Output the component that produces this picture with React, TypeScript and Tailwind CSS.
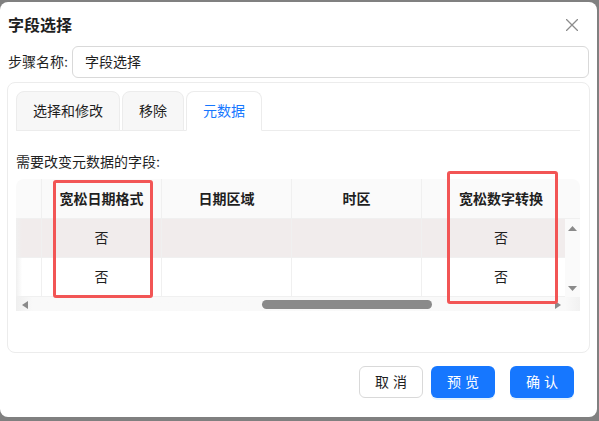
const cols = [
  { key: "idx", title: "", width: 26 },
  { key: "lenientDate", title: "宽松日期格式", width: 120 },
  { key: "dateLocale", title: "日期区域", width: 130 },
  { key: "timezone", title: "时区", width: 130 },
  { key: "lenientNumber", title: "宽松数字转换", width: 158 },
]

const rows = [
  { idx: "", lenientDate: "否", dateLocale: "", timezone: "", lenientNumber: "否" },
  { idx: "", lenientDate: "否", dateLocale: "", timezone: "", lenientNumber: "否" },
] as Record<string, string>[]

const tabs = [
  { label: "选择和修改", width: "w-[104px]" },
  { label: "移除", width: "w-[62px]" },
  { label: "元数据", width: "w-[76px]" },
]

function Triangle({ dir }: { dir: "up" | "down" | "left" | "right" }) {
  const pts = {
    up: "0,5 4.5,0 9,5",
    down: "0,0 9,0 4.5,5",
    left: "6,0 6,8 0,4",
    right: "0,0 6,4 0,8",
  }[dir]
  const box = dir === "up" || dir === "down" ? "0 0 9 5" : "0 0 6 8"
  const cls = dir === "up" || dir === "down" ? "w-[9px] h-[5px]" : "w-[6px] h-[8px]"
  return (
    <svg viewBox={box} className={cls}>
      <polygon points={pts} fill="#8a8a8a" />
    </svg>
  )
}

function CloseIcon() {
  return (
    <svg viewBox="0 0 12 12" className="w-[12px] h-[12px]">
      <path d="M0.5 0.5 L11.5 11.5 M11.5 0.5 L0.5 11.5" stroke="#8c8c8c" strokeWidth="1.3" strokeLinecap="round" />
    </svg>
  )
}

function MetaTable() {
  return (
    <div className="relative w-[564px] h-[133px]">
      {/* header */}
      <div className="flex h-[40px] w-[564px] rounded-t-lg bg-[#fafafa] border-b border-[#f0f0f0] overflow-hidden">
        {cols.map((c, i) => (
          <div
            key={c.key}
            style={{ width: c.width }}
            className={`shrink-0 flex items-center justify-center text-[14px] leading-[20px] font-bold text-[#1f1f1f] ${i < cols.length - 1 ? "border-r border-[#f0f0f0]" : ""}`}
          >
            {c.title}
          </div>
        ))}
      </div>

      {/* body + vertical scrollbar */}
      <div className="flex">
        <div className="w-[549px] overflow-hidden">
          {rows.map((r, ri) => (
            <div key={ri} className={`flex h-[39px] border-b border-[#f0f0f0] ${ri === 0 ? "bg-[#f1ecec]" : "bg-white"}`}>
              {cols.map((c, i) => (
                <div
                  key={c.key}
                  style={{ width: c.width }}
                  className={`shrink-0 flex items-center justify-center text-[14px] leading-[20px] text-[#1f1f1f] ${i < cols.length - 1 ? "border-r border-[#f0f0f0]" : ""} ${i === 0 ? "bg-gradient-to-r from-[#f0f0f0] to-transparent to-[25%]" : ""}`}
                >
                  {r[c.key]}
                </div>
              ))}
            </div>
          ))}
        </div>
        <div className="w-[15px] h-[78px] bg-[#fafafa] flex flex-col items-center justify-between pt-[7px] pb-[6px]">
          <Triangle dir="up" />
          <Triangle dir="down" />
        </div>
      </div>

      {/* horizontal scrollbar */}
      <div className="flex h-[14px] w-[564px] bg-[#f9f9f9]">
        <div className="relative w-[549px] h-full bg-gradient-to-r from-[#efefef] to-[#f9f9f9] to-[3%]">
          <div className="absolute left-[6px] top-[4px]"><Triangle dir="left" /></div>
          <div className="absolute left-[246px] top-[3px] w-[170px] h-[9px] rounded-full bg-[#8a8a8a]" />
          <div className="absolute left-[539px] top-[4px]"><Triangle dir="right" /></div>
        </div>
        <div className="w-[15px] h-full bg-gradient-to-r from-[#f9f9f9] to-[#f1f1f1]" />
      </div>

      {/* highlight boxes */}
      <div className="absolute left-[37px] top-[1px] w-[100px] h-[118px] border-[3px] border-[#f25555] rounded-[3px]" />
      <div className="absolute left-[431px] top-[-8px] w-[111px] h-[133px] border-[3px] border-[#f25555] rounded-[3px]" />
    </div>
  )
}

export default function App() {
  return (
    <div className="w-[599px] h-[421px] bg-[#808080] pt-[2px] overflow-hidden font-['Inter','Noto_Sans_CJK_SC',sans-serif] text-[#1f1f1f]">
      <div className="w-[597px] h-[415px] bg-white rounded-lg flex flex-col">
        {/* title */}
        <div className="flex items-center justify-between h-[45px] pl-2 pr-[19px]">
          <div className="text-[16px] leading-[20px] font-bold">字段选择</div>
          <CloseIcon />
        </div>

        {/* step name */}
        <div className="flex items-center h-[32px] pl-2 -mt-px">
          <div className="w-[64px] text-[14px] leading-[20px]">步骤名称:</div>
          <div className="w-[517px] h-[32px] border border-[#d9d9d9] rounded-md flex items-center px-3 text-[14px] leading-[20px]">
            字段选择
          </div>
        </div>

        {/* tabs panel */}
        <div className="ml-[7px] mt-[4px] w-[583px] h-[271px] border border-[#ececec] rounded-lg pt-2 pl-2">
          <div className="flex gap-[2px] h-[40px] w-[564px] border-b border-[#ececec]">
            {tabs.map((t, i) => {
              const active = i === 2
              return (
                <div
                  key={t.label}
                  className={`${t.width} h-[40px] flex items-center justify-center rounded-t-lg border border-[#ececec] text-[14px] leading-[20px] ${active ? "bg-white border-b-white text-[#1677ff]" : "bg-[#f7f7f7] text-[#1f1f1f]"}`}
                >
                  {t.label}
                </div>
              )
            })}
          </div>
          <div className="mt-[21px] text-[14px] leading-[20px]">需要改变元数据的字段:</div>
          <div className="mt-[7px]">
            <MetaTable />
          </div>
        </div>

        {/* footer */}
        <div className="flex justify-end items-center mt-[13px] pr-[23px]">
          <button className="w-[64px] h-[32px] rounded-md border border-[#d9d9d9] bg-white text-[14px] leading-[20px] text-[#1f1f1f]">取 消</button>
          <button className="ml-[8px] w-[64px] h-[32px] rounded-md bg-[#1677ff] text-white text-[14px] leading-[20px] shadow-[0_2px_0_rgba(5,145,255,0.1)]">预 览</button>
          <button className="ml-[15px] w-[64px] h-[32px] rounded-md bg-[#1677ff] text-white text-[14px] leading-[20px] shadow-[0_2px_0_rgba(5,145,255,0.1)]">确 认</button>
        </div>
      </div>
    </div>
  )
}
